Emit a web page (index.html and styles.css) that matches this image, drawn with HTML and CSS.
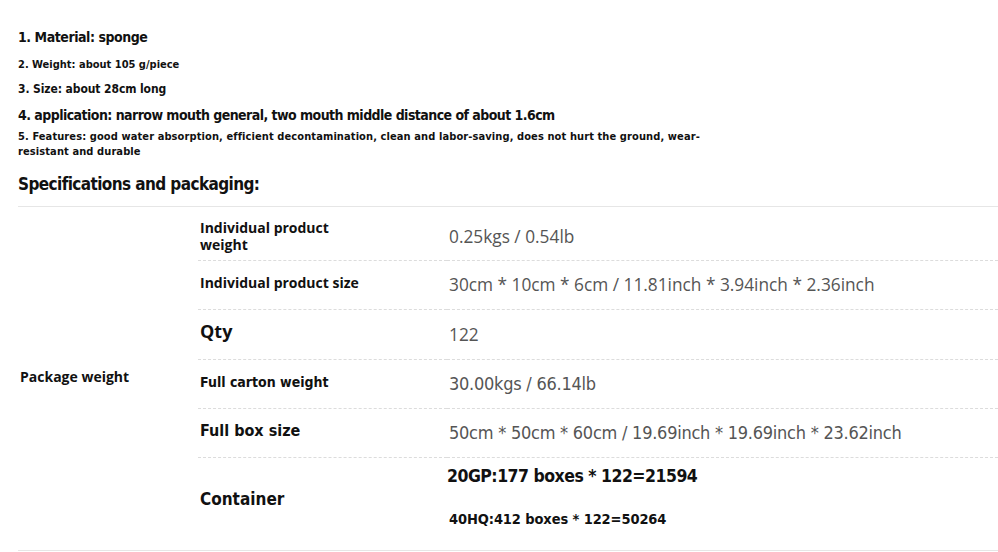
FILE: index.html
```html
<!DOCTYPE html>
<html lang="en">
<head>
<meta charset="utf-8">
<title>Specifications</title>
<link rel="stylesheet" href="styles.css">
</head>
<body>
<div class="page">
  <p class="feat f1">1. Material: sponge</p>
  <p class="feat f2">2. Weight: about 105 g/piece</p>
  <p class="feat f3">3. Size: about 28cm long</p>
  <p class="feat f4">4. application: narrow mouth general, two mouth middle distance of about 1.6cm</p>
  <p class="feat f5">5. Features: good water absorption, efficient decontamination, clean and labor-saving, does not hurt the ground, wear-resistant and durable</p>
  <h2 class="spec-title">Specifications and packaging:</h2>

  <div class="spec">
    <div class="group">Package weight</div>

    <div class="label l-sans first">Individual product<br>weight</div>
    <div class="value v-sans first">0.25kgs / 0.54lb</div>

    <div class="label l-sans">Individual product size</div>
    <div class="value v-sans">30cm * 10cm * 6cm / 11.81inch * 3.94inch * 2.36inch</div>

    <div class="label l-sans l-big">Qty</div>
    <div class="value v-sans">122</div>

    <div class="label l-narrow l-14">Full carton weight</div>
    <div class="value v-narrow">30.00kgs / 66.14lb</div>

    <div class="label l-narrow l-16">Full box size</div>
    <div class="value v-narrow">50cm * 50cm * 60cm / 19.69inch * 19.69inch * 23.62inch</div>

    <div class="label l-narrow l-17 last">Container</div>
    <div class="value last container">
      <span class="c1">20GP:177 boxes * 122=21594</span>
      <span class="c2">40HQ:412 boxes * 122=50264</span>
    </div>
  </div>
</div>
</body>
</html>
```

FILE: styles.css
```css
* { box-sizing: border-box; }
html, body { margin: 0; padding: 0; background: #fff; }
body { color: #111; }

.page { padding: 27px 0 0 18px; width: 998px; }

.feat {
  margin: 0;
  font-family: "DejaVu Sans Condensed", "Liberation Sans", sans-serif;
  font-weight: 700;
  color: #111;
}
.f1 { font-size: 14px; line-height: 20px; letter-spacing: -0.45px; }
.f2 { font-size: 11px; line-height: 16px; margin-top: 10px; }
.f3 { font-size: 12px; line-height: 16px; margin-top: 8px; letter-spacing: -0.1px; }
.f4 { font-size: 14px; line-height: 20px; margin-top: 8px; letter-spacing: -0.55px; }
.f5 { font-size: 11px; line-height: 15px; margin-top: 4px; width: 700px; letter-spacing: 0.1px; }

.spec-title {
  margin: 13px 0 0;
  font-family: "DejaVu Sans Condensed", "Liberation Sans", sans-serif;
  font-weight: 700;
  font-size: 17px;
  line-height: 24px;
  letter-spacing: -0.6px;
  color: #111;
}

.spec {
  margin-top: 10px;
  display: grid;
  grid-template-columns: 180px 249px 1fr;
  grid-template-rows: 54px 49px 50px 49px 49px 92px;
  border-top: 1px solid #e6e6e6;
  border-bottom: 1px solid #e6e6e6;
}

.group {
  grid-column: 1;
  grid-row: 1 / span 6;
  display: flex;
  align-items: center;
  padding-left: 2px;
  padding-bottom: 4px;
  font-family: "Open Sans", "Noto Sans", sans-serif;
  font-weight: 700;
  font-size: 14px;
  color: #111;
}

.label, .value {
  display: flex;
  align-items: center;
  border-bottom: 1px dashed #dcdcdc;
}
.label { grid-column: 2; padding-left: 2px; padding-bottom: 5px; color: #111; font-weight: 700; }
.value { grid-column: 3; padding-left: 2px; padding-bottom: 1px; color: #555; }
.label.first, .value.first { padding-top: 5px; padding-bottom: 0; }
.last { border-bottom: none; }

.l-sans { font-family: "Open Sans", "Noto Sans", sans-serif; font-size: 14px; line-height: 17px; }
.l-big { font-size: 18px; line-height: 24px; padding-bottom: 8px; }
.l-narrow { font-family: "DejaVu Sans Condensed", "Liberation Sans", sans-serif; }
.l-14 { font-size: 14px; }
.l-16 { font-size: 16px; }
.l-17 { font-size: 17px; padding-bottom: 10px; }

.v-sans { font-family: "Open Sans", "Noto Sans", sans-serif; font-size: 17.3px; }
.v-narrow { font-family: "DejaVu Sans Condensed", "Liberation Sans", sans-serif; font-size: 18px; letter-spacing: -0.25px; }

.container {
  flex-direction: column;
  align-items: flex-start;
  justify-content: flex-start;
  padding: 6px 0 0 0;
  font-family: "DejaVu Sans Condensed", "Liberation Sans", sans-serif;
  font-weight: 700;
  color: #111;
}
.c1 { font-size: 17.5px; line-height: 24px; letter-spacing: -0.5px; }
.c2 { font-size: 14.5px; line-height: 20px; margin-top: 21px; padding-left: 2px; letter-spacing: -0.1px; }
```
